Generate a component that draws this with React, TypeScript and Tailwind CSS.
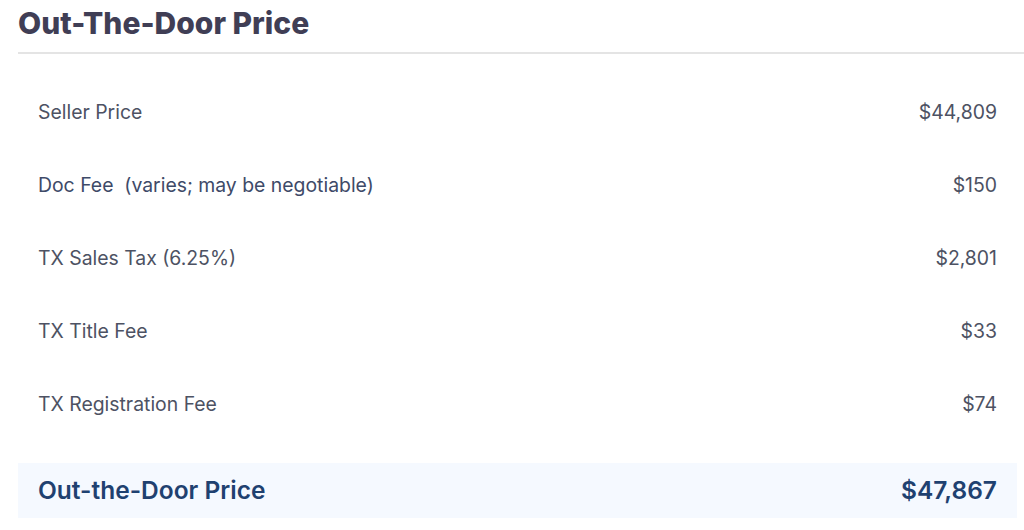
import React from "react";

const rows: { label: string; value: string; blue?: boolean }[] = [
  { label: "Seller Price", value: "$44,809" },
  { label: "Doc Fee\u00a0 (varies; may be negotiable)", value: "$150", blue: true },
  { label: "TX Sales Tax (6.25%)", value: "$2,801" },
  { label: "TX Title Fee", value: "$33" },
  { label: "TX Registration Fee", value: "$74" },
];

export default function App() {
  return (
    <div
      className="w-[1024px] h-[530px] bg-white overflow-hidden pl-[18px]"
      style={{ fontFamily: "Inter, 'Noto Sans', sans-serif" }}
    >
      <div className="pt-[5px] pb-[11px] border-b-2 border-[#e4e4e4]">
        <h2 className="text-[30px] leading-[36px] font-extrabold text-[#403e55]">
          Out-The-Door Price
        </h2>
      </div>
      <div className="mr-[7px] pt-[22px]">
        {rows.map((r) => (
          <div
            key={r.value}
            className="flex items-center justify-between px-[20px] h-[73px] text-[19.4px] leading-[27px]"
          >
            <span className={r.blue ? "text-[#3e4a68]" : "text-[#4d5263]"}>{r.label}</span>
            <span className="text-[#4d5263]">{r.value}</span>
          </div>
        ))}
        <div className="mt-[22px] h-[55px] bg-[#f5f9ff] flex items-center justify-between px-[20px] text-[24.5px] font-semibold text-[#1f4170]">
          <span>Out-the-Door Price</span>
          <span>$47,867</span>
        </div>
      </div>
    </div>
  );
}
